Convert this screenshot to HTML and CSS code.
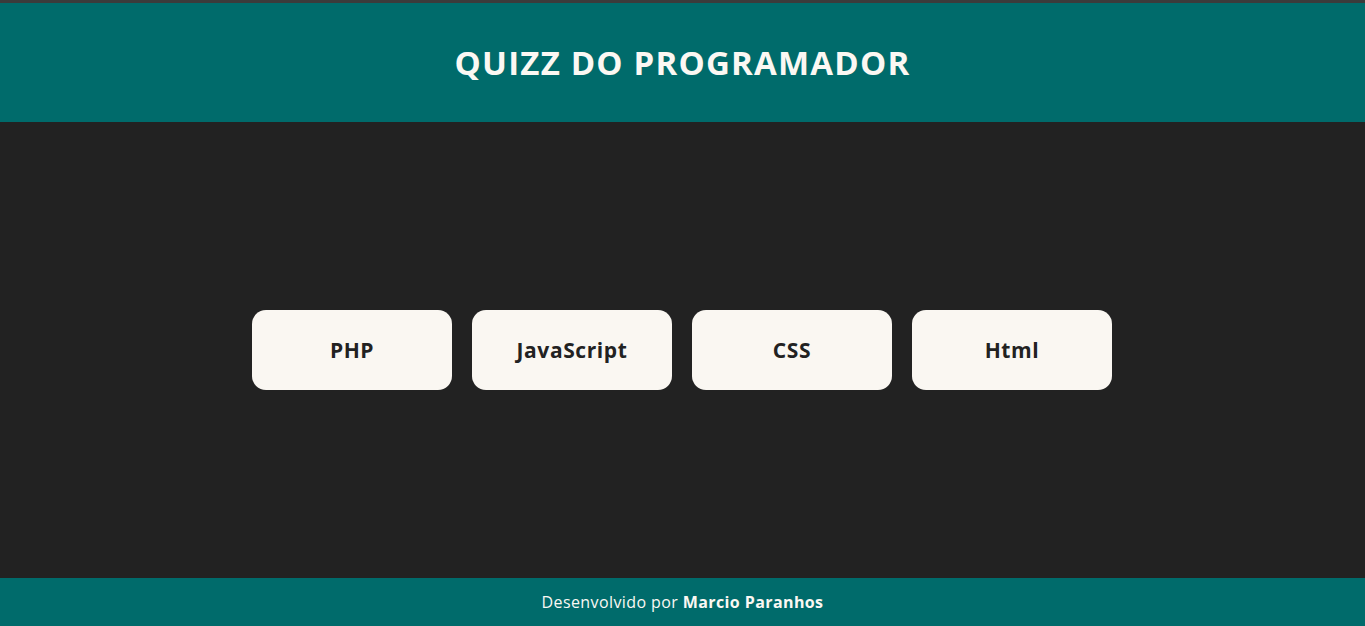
FILE: index.html
```html
<!DOCTYPE html>
<html lang="pt-BR">
<head>
<meta charset="utf-8">
<title>Quizz do Programador</title>
<link rel="stylesheet" href="styles.css">
</head>
<body>
<div class="page">
  <header class="header">
    <h1 class="title">QUIZZ DO PROGRAMADOR</h1>
  </header>
  <main class="main">
    <div class="options">
      <button class="option">PHP</button>
      <button class="option">JavaScript</button>
      <button class="option">CSS</button>
      <button class="option">Html</button>
    </div>
  </main>
  <footer class="footer">
    <p class="credit">Desenvolvido por <strong>Marcio Paranhos</strong></p>
  </footer>
</div>
</body>
</html>
```
FILE: styles.css
```css
* { box-sizing: border-box; }
html, body { margin: 0; padding: 0; height: 100%; }
body {
  font-family: "Open Sans", "Noto Sans", sans-serif;
  background: #222222;
}
.page {
  height: 626px;
  display: flex;
  flex-direction: column;
  border-top: 3px solid #3b3b3b;
}
.header {
  background: #006b6b;
  height: 119px;
  display: flex;
  align-items: center;
  justify-content: center;
  flex-shrink: 0;
}
.title {
  margin: 0;
  color: #fbf8f3;
  font-size: 33px;
  font-weight: 700;
  letter-spacing: 1.2px;
}
.main {
  flex: 1;
  display: flex;
  align-items: center;
  justify-content: center;
}
.options {
  display: flex;
  gap: 20px;
  margin-left: -1px;
}
.option {
  width: 200px;
  height: 80px;
  border: none;
  border-radius: 14px;
  background: #faf7f2;
  color: #222222;
  font-family: "Open Sans", "Noto Sans", sans-serif;
  font-size: 21px;
  font-weight: 700;
  letter-spacing: 0.6px;
  cursor: pointer;
}
.footer {
  background: #006b6b;
  height: 48px;
  flex-shrink: 0;
  display: flex;
  align-items: center;
  justify-content: center;
}
.credit {
  margin: 0;
  color: #fbf8f3;
  font-size: 16px;
  letter-spacing: 0.4px;
}
.credit strong { font-weight: 700; }
```
